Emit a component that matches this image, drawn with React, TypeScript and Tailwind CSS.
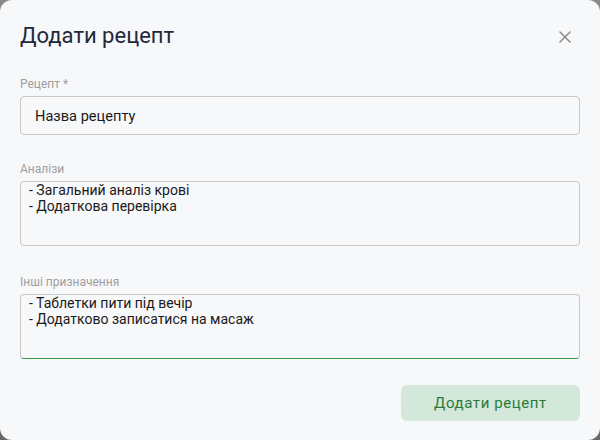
import React from "react";

export default function App() {
  return (
    <div className="w-[600px] h-[440px] bg-gradient-to-b from-[#8a8a8a] to-[#686868]" style={{ fontFamily: "Roboto, 'Noto Sans', sans-serif" }}>
      <div className="w-[600px] h-[440px] rounded-[12px] bg-[#f7f8fa] px-[20px] flex flex-col">
        <div className="flex items-start justify-between pt-[20px] h-[54px]">
          <h2 className="text-[22px] leading-[32px] text-[#1e293b] font-normal">Додати рецепт</h2>
          <button className="mt-[11px] mr-[9px] w-[12px] h-[12px] flex items-center justify-center text-[#8a8a8a]">
            <svg width="12" height="12" viewBox="0 0 12 12" fill="none" stroke="currentColor" strokeWidth="1.5" strokeLinecap="round">
              <path d="M1 1 L11 11 M11 1 L1 11" />
            </svg>
          </button>
        </div>

        <label className="mt-[22px] text-[12px] leading-[16px] text-[#9e9e9e]">Рецепт *</label>
        <input
          readOnly
          defaultValue="Назва рецепту"
          className="mt-[4px] h-[39px] w-full rounded-[4px] border border-[#c8c8c8] bg-transparent pl-[14px] text-[14.6px] text-[#1a1a1a] outline-none"
        />

        <label className="mt-[26px] text-[12px] leading-[16px] text-[#9e9e9e]">Аналізи</label>
        <textarea
          readOnly
          defaultValue={"- Загальний аналіз крові\n- Додаткова перевірка"}
          className="mt-[4px] h-[65px] w-full resize-none rounded-[4px] border border-[#c8c8c8] bg-transparent pl-[8px] pt-0 text-[14px] leading-[16px] text-[#1a1a1a] outline-none"
        />

        <label className="mt-[28px] text-[12px] leading-[16px] text-[#9e9e9e]">Інші призначення</label>
        <textarea
          readOnly
          defaultValue={"- Таблетки пити під вечір\n- Додатково записатися на масаж"}
          className="mt-[4px] h-[65px] w-full resize-none rounded-[4px] border border-[#c8c8c8] border-b-[#3f9b4f] bg-transparent pl-[8px] pt-0 text-[14px] leading-[16px] text-[#1a1a1a] outline-none"
        />

        <div className="mt-[26px] flex justify-end">
          <button className="w-[179px] h-[36px] rounded-[6px] bg-[#d3e8da] text-[15px] tracking-[0.6px] text-[#2a7a3a]">
            Додати рецепт
          </button>
        </div>
      </div>
    </div>
  );
}
